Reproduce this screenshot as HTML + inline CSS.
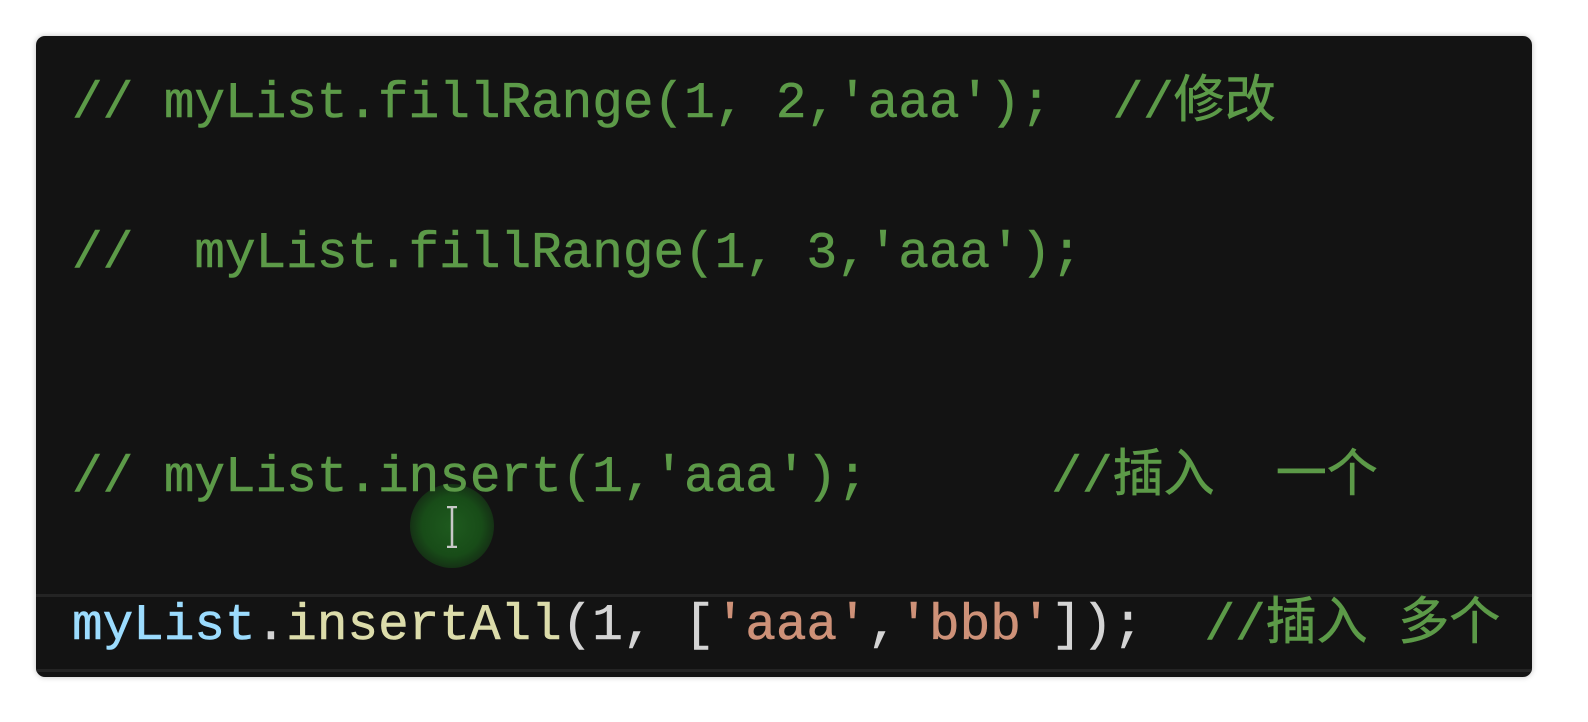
<!DOCTYPE html>
<html><head><meta charset="utf-8"><style>
html,body{margin:0;padding:0;background:#fff;width:1588px;height:722px;overflow:hidden}
.panel{position:absolute;left:36px;top:36px;width:1496px;height:641px;background:#131313;border-radius:9px;box-shadow:0 0 6px rgba(0,0,0,.25);overflow:hidden}
.l{position:absolute;left:36px;font-family:"Liberation Mono","Noto Sans CJK SC",monospace;font-size:51px;line-height:60px;white-space:pre;color:#5c9a48;-webkit-text-stroke:0.6px currentColor}
.band{position:absolute;left:0;right:0;top:558px;height:72px;border-top:3px solid #242424;border-bottom:3px solid #242424}
.v{color:#9cdcfe}.f{color:#dcdcaa}.s{color:#ce9178}.p{color:#d4d4d4}
.cur{position:absolute;left:374px;top:448px;width:84px;height:84px;border-radius:50%;background:radial-gradient(circle,#1e5a1e 0%,#184c18 50%,rgba(20,50,20,0.6) 80%,rgba(19,19,19,0) 100%)}
.ib{position:absolute;left:409px;top:470px;width:14px;height:42px}
</style></head><body>
<div class="panel">
<div class="l" style="top:39px">// myList.fillRange(1, 2,'aaa');  //修改</div>
<div class="l" style="top:189px">//  myList.fillRange(1, 3,'aaa');</div>
<div class="cur"></div>
<svg class="ib" viewBox="0 0 14 42"><path d="M2 1h10M7 1v40M2 41h10" stroke="#c8c8c8" stroke-width="2.5" fill="none"/></svg>
<div class="l" style="top:413px">// myList.insert(1,'aaa');      //插入  一个</div>
<div class="band"></div>
<div class="l" style="top:561px"><span class="v">myList</span><span class="p">.</span><span class="f">insertAll</span><span class="p">(1, [</span><span class="s">'aaa'</span><span class="p">,</span><span class="s">'bbb'</span><span class="p">]);</span>  //插入 多个</div>
</div>
</body></html>
